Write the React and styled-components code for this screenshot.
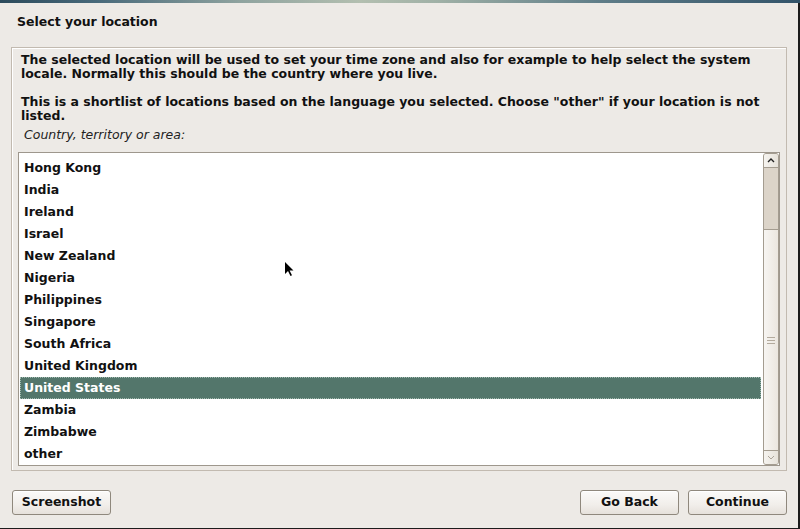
import React from "react";
import styled, { createGlobalStyle } from "styled-components";

const GlobalStyle = createGlobalStyle`
  html, body { margin: 0; padding: 0; background: #edeae6; }
  body { font-family: "DejaVu Sans", "Liberation Sans", sans-serif; }
  * { box-sizing: border-box; }
`;

const Screen = styled.div`
  position: relative;
  width: 800px;
  height: 529px;
  display: flex;
  flex-direction: column;
  background: #edeae6;
  overflow: hidden;
`;

const Banner = styled.div`
  height: 3px;
  flex: none;
  background: linear-gradient(
    90deg,
    #2c4b5c 0%,
    #48697a 12%,
    #8fa39f 30%,
    #b3bfb0 45%,
    #9fb0a6 55%,
    #5f7d88 75%,
    #33546a 100%
  );
`;

const Window = styled.div`
  flex: 1;
  display: flex;
  flex-direction: column;
  border-right: 2px solid #1c1c1c;
  border-bottom: 1px solid #1c1c1c;
`;

const Title = styled.div`
  height: 44px;
  padding: 12px 0 0 17px;
  font-weight: bold;
  font-size: 12.5px;
  line-height: 14px;
  color: #111;
`;

const Frame = styled.div`
  margin: 0 11px;
  height: 424px;
  border: 1px solid #c2bab0;
  box-shadow: inset 1px 1px 0 #ffffff;
  display: flex;
  flex-direction: column;
  padding: 5px 6px 4px 6px;
`;

const Para = styled.p`
  margin: 0 0 14px 3px;
  font-weight: bold;
  font-size: 12.5px;
  line-height: 14px;
  color: #111;
  white-space: nowrap;
`;

const Label = styled.div`
  margin: -9px 0 0 6px;
  font-style: italic;
  font-size: 12.5px;
  line-height: 14px;
  height: 23px;
  color: #222;
`;

const ListBox = styled.div`
  flex: 1;
  display: flex;
  background: #ffffff;
  border: 1px solid #9e978d;
  margin-top: 1px;
`;

const Rows = styled.div`
  flex: 1;
  padding: 4px 2px 0 1px;
  overflow: hidden;
`;

const Row = styled.div`
  height: 22px;
  padding: 0 0 1px 4px;
  display: flex;
  align-items: center;
  font-weight: bold;
  font-size: 12.5px;
  color: ${(p) => (p.$selected ? "#ffffff" : "#111")};
  background: ${(p) => (p.$selected ? "#53766b" : "transparent")};
  outline: ${(p) => (p.$selected ? "1px dotted #9fb8ae" : "none")};
  outline-offset: -1px;
`;

const ScrollBar = styled.div`
  width: 16px;
  flex: none;
  display: flex;
  flex-direction: column;
  border: 1px solid #a49c90;
  border-radius: 3px;
  overflow: hidden;
  background: #dcd4c9;
`;

const Arrow = styled.div`
  height: 14px;
  flex: none;
  display: flex;
  align-items: center;
  justify-content: center;
  background: linear-gradient(90deg, #f6f4f0, #e7e2da);
  border-${(p) => (p.$up ? "bottom" : "top")}: 1px solid #a49c90;
`;

const Trough = styled.div`
  height: 61px;
  flex: none;
  background: #dcd4c9;
`;

const Thumb = styled.div`
  flex: 1;
  display: flex;
  align-items: center;
  justify-content: center;
  background: linear-gradient(90deg, #f7f5f2, #ebe6df);
  border-top: 1px solid #a49c90;
`;

const Grip = styled.div`
  width: 8px;
  height: 7px;
  background: repeating-linear-gradient(
    180deg,
    #b3aa9d 0px,
    #b3aa9d 1px,
    transparent 1px,
    transparent 3px
  );
`;

const ButtonBar = styled.div`
  display: flex;
  align-items: center;
  padding: 19px 11px 0 12px;
  gap: 9px;
`;

const Spacer = styled.div`
  flex: 1;
`;

const Button = styled.button`
  width: ${(p) => p.$w}px;
  height: 25px;
  border: 1px solid #8f887d;
  border-radius: 3px;
  background: linear-gradient(180deg, #fbfaf9 0%, #f1eeea 60%, #e6e1db 100%);
  font-family: "DejaVu Sans", "Liberation Sans", sans-serif;
  font-weight: bold;
  font-size: 12.5px;
  color: #111;
  padding: 0 0 2px 0;
  box-shadow: inset 0 1px 0 #ffffff;
`;

const Cursor = styled.svg`
  position: absolute;
  left: 284px;
  top: 261px;
`;

const items = [
  "Hong Kong",
  "India",
  "Ireland",
  "Israel",
  "New Zealand",
  "Nigeria",
  "Philippines",
  "Singapore",
  "South Africa",
  "United Kingdom",
  "United States",
  "Zambia",
  "Zimbabwe",
  "other",
];

export default function App() {
  return (
    <>
      <GlobalStyle />
      <Screen>
        <Banner />
        <Window>
          <Title>Select your location</Title>
          <Frame>
            <Para>
              The selected location will be used to set your time zone and also for example to help select the system
              <br />
              locale. Normally this should be the country where you live.
            </Para>
            <Para>
              This is a shortlist of locations based on the language you selected. Choose "other" if your location is not
              <br />
              listed.
            </Para>
            <Label>Country, territory or area:</Label>
            <ListBox>
              <Rows>
                {items.map((it) => (
                  <Row key={it} $selected={it === "United States"}>
                    {it}
                  </Row>
                ))}
              </Rows>
              <ScrollBar>
                <Arrow $up>
                  <svg width="8" height="5" viewBox="0 0 8 5">
                    <path d="M1 4 L4 1 L7 4" fill="none" stroke="#222" strokeWidth="1.4" />
                  </svg>
                </Arrow>
                <Trough />
                <Thumb>
                  <Grip />
                </Thumb>
                <Arrow>
                  <svg width="8" height="5" viewBox="0 0 8 5">
                    <path d="M1 1 L4 4 L7 1" fill="none" stroke="#aaa398" strokeWidth="1" />
                  </svg>
                </Arrow>
              </ScrollBar>
            </ListBox>
          </Frame>
          <ButtonBar>
            <Button $w={99}>Screenshot</Button>
            <Spacer />
            <Button $w={99}>Go Back</Button>
            <Button $w={99}>Continue</Button>
          </ButtonBar>
        </Window>
        <Cursor width="12" height="18" viewBox="0 0 12 18">
          <path d="M1 1 L1 13 L4 10 L6.5 15 L8 14.3 L5.6 9.5 L9.5 9.5 Z" fill="#000" />
        </Cursor>
      </Screen>
    </>
  );
}
